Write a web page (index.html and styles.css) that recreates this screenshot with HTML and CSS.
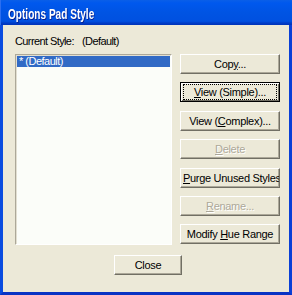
FILE: index.html
```html
<!DOCTYPE html>
<html lang="en">
<head>
  <meta charset="UTF-8">
  <title>Options Pad Style</title>
  <link rel="stylesheet" href="styles.css">
</head>
<body>

  <div class="window">
    <div class="titlebar">
      <span class="title">Options Pad Style</span>
    </div>

    <div class="frame">
      <div class="current">
        <span class="current-label">Current Style:</span>
        <span class="current-value">(Default)</span>
      </div>

      <div class="main">
        <div class="listbox">
          <div class="item selected">* (Default)</div>
        </div>

        <div class="buttons">
          <button class="btn"><span>Cop<u>y</u>...</span></button>
          <button class="btn default"><span class="focus"><u>V</u>iew (Simple)...</span></button>
          <button class="btn"><span>View (<u>C</u>omplex)...</span></button>
          <button class="btn" disabled><span><u>D</u>elete</span></button>
          <button class="btn wide"><span><u>P</u>urge Unused Styles</span></button>
          <button class="btn" disabled><span><u>R</u>ename...</span></button>
          <button class="btn"><span>Modify <u>H</u>ue Range</span></button>
        </div>
      </div>

      <div class="footer">
        <button class="btn close"><span>Close</span></button>
      </div>
    </div>
  </div>

</body>
</html>
```

FILE: styles.css
```css
body {
  margin: 0;
  background: #ece9d8;
}

.window {
  width: 292px;
  height: 295px;
  display: flex;
  flex-direction: column;
  font-family: "Liberation Sans", Arial, sans-serif;
  font-size: 11px;
  color: #000;
}

/* Title bar */
.titlebar {
  height: 25px;
  flex: none;
  box-sizing: border-box;
  padding-left: 7px;
  display: flex;
  align-items: center;
  background: linear-gradient(to bottom, #0a5fe8 0%, #0058ee 12%, #0054e3 50%, #0050e0 85%, #003dc8 92%, #0033b8 100%);
  border-left: 1px solid #2c6ef0;
}

.title {
  color: #fff;
  font-weight: bold;
  font-size: 14px;
  transform: scaleX(0.72);
  transform-origin: left center;
  white-space: nowrap;
  text-shadow: 1px 1px 0 #0a1e8a;
  margin-top: 3px;
}

/* Window body */
.frame {
  flex: 1;
  border-left: 3px solid #0a4ce0;
  border-right: 3px solid #0a3fd6;
  border-bottom: 3px solid #0933c4;
  padding: 10px 0 0 12px;
  display: flex;
  flex-direction: column;
}

.current {
  display: flex;
  height: 13px;
  line-height: 13px;
  letter-spacing: -0.6px;
}

.current-label {
  width: 67px;
}

.main {
  display: flex;
  gap: 8px;
  margin-top: 6px;
}

/* List box */
.listbox {
  width: 157px;
  height: 191px;
  box-sizing: border-box;
  background: #fbfdf9;
  border-top: 1px solid #aca899;
  border-left: 1px solid #aca899;
  border-right: 1px solid #fff;
  border-bottom: 1px solid #fff;
  box-shadow: inset 1px 1px 0 #e2dfd1;
  padding: 1px 1px 0 1px;
}

.item {
  height: 11px;
  line-height: 11px;
  padding-left: 2px;
  letter-spacing: -0.5px;
  white-space: nowrap;
}

.item.selected {
  background: #316ac5;
  color: #fff;
}

/* Buttons */
.buttons {
  display: flex;
  flex-direction: column;
  gap: 8.4px;
}

.btn {
  width: 100px;
  height: 20px;
  box-sizing: border-box;
  padding: 0;
  font-family: inherit;
  font-size: 11px;
  color: #000;
  background: #ece9d8;
  border-top: 1px solid #fff;
  border-left: 1px solid #fff;
  border-right: 1px solid #716f64;
  border-bottom: 1px solid #716f64;
  box-shadow: inset -1px -1px 0 #aca899;
  display: flex;
  align-items: center;
  justify-content: center;
  white-space: nowrap;
  overflow: hidden;
  letter-spacing: -0.3px;
}

.btn.default {
  border: 1px solid #000;
  box-shadow: inset 1px 1px 0 #fff, inset -1px -1px 0 #716f64;
}

.focus {
  flex: 1;
  margin: 0 2px;
  height: 14px;
  line-height: 14px;
  border: 1px dotted #000;
  text-align: center;
}

.btn.wide {
  justify-content: flex-start;
  padding-left: 2px;
}

.btn:disabled {
  color: #aca899;
  text-shadow: 1px 1px 0 #fff;
}

/* Footer */
.footer {
  padding-left: 99px;
  margin-top: 10px;
}

.btn.close {
  width: 68px;
}
```
